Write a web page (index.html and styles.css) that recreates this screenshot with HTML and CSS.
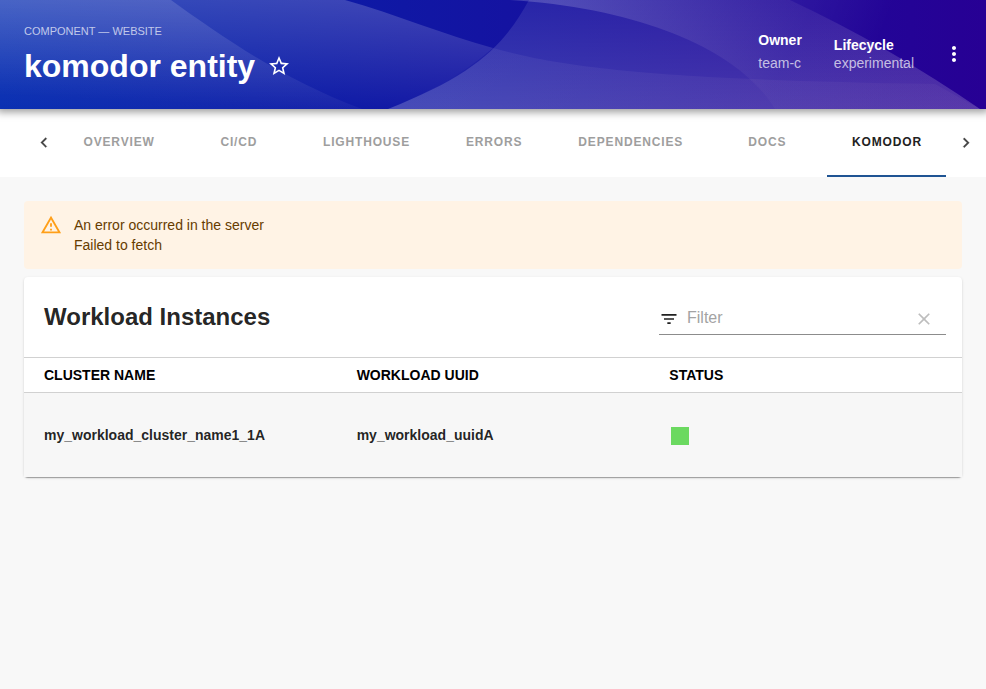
FILE: index.html
```html
<!DOCTYPE html>
<html lang="en">
<head>
<meta charset="utf-8">
<title>komodor entity</title>
<link rel="stylesheet" href="styles.css">
</head>
<body>
<header class="header">
  <svg class="waves" viewBox="0 0 986 109" preserveAspectRatio="none" aria-hidden="true">
    <defs>
      <linearGradient id="left" x1="0" y1="0" x2="0" y2="1"><stop offset="0" stop-color="#fff" stop-opacity=".14"/><stop offset="1" stop-color="#fff" stop-opacity=".04"/></linearGradient>
      <linearGradient id="band" gradientUnits="userSpaceOnUse" x1="310" y1="0" x2="305" y2="109"><stop offset="0" stop-color="#fff" stop-opacity=".19"/><stop offset="1" stop-color="#fff" stop-opacity="0"/></linearGradient>
      <linearGradient id="arc" gradientUnits="userSpaceOnUse" x1="0" y1="0" x2="0" y2="109"><stop offset="0" stop-color="#fff" stop-opacity=".08"/><stop offset="1" stop-color="#fff" stop-opacity=".18"/></linearGradient>
      <linearGradient id="low" gradientUnits="userSpaceOnUse" x1="450" y1="0" x2="900" y2="0"><stop offset="0" stop-color="#fff" stop-opacity=".06"/><stop offset="1" stop-color="#ffd0d0" stop-opacity=".04"/></linearGradient>
      <linearGradient id="top" gradientUnits="userSpaceOnUse" x1="560" y1="0" x2="760" y2="109"><stop offset="0" stop-color="#fff" stop-opacity=".18"/><stop offset="1" stop-color="#ffe0e0" stop-opacity=".025"/></linearGradient>
      <linearGradient id="corner" gradientUnits="userSpaceOnUse" x1="780" y1="0" x2="880" y2="40"><stop offset="0" stop-color="#fff" stop-opacity=".07"/><stop offset="1" stop-color="#fff" stop-opacity="0"/></linearGradient>
    </defs>
    <path fill="url(#left)" d="M0 0H171C225 39 285 80 362 109H0z"/>
    <path fill="url(#band)" d="M0 0H345C395 14 445 35 493 48C465 73 430 92 388 109H0z"/>
    <path fill="url(#arc)" d="M529 0C504 46 474 75 388 109H980Q890 47 790 0z"/>
    <path fill="url(#low)" d="M493 48C570 70 680 80 935 84L980 109H388C430 92 465 73 493 48z"/>
    <path fill="url(#top)" d="M510 0C640 8 740 50 775 109H980Q890 47 790 0z"/>
    <path fill="url(#corner)" d="M790 0H986V109H980Q890 47 790 0z"/>
  </svg>
  <div class="heading">
    <p class="kind">COMPONENT — WEBSITE</p>
    <h1 class="title">komodor entity
      <svg class="star" viewBox="0 0 24 24"><path d="M22 9.24l-7.19-.62L12 2 9.19 8.63 2 9.24l5.46 4.73L5.82 21 12 17.27 18.18 21l-1.63-7.03L22 9.24zM12 15.4l-3.76 2.27 1-4.28-3.32-2.88 4.38-.38L12 6.1l1.71 4.04 4.38.38-3.32 2.88 1 4.28L12 15.4z"/></svg>
    </h1>
  </div>
  <dl class="meta owner"><dt>Owner</dt><dd>team-c</dd></dl>
  <dl class="meta lifecycle"><dt>Lifecycle</dt><dd>experimental</dd></dl>
  <svg class="more" viewBox="0 0 24 24"><path d="M12 8c1.1 0 2-.9 2-2s-.9-2-2-2-2 .9-2 2 .9 2 2 2zm0 2c-1.1 0-2 .9-2 2s.9 2 2 2 2-.9 2-2-.9-2-2-2zm0 6c-1.1 0-2 .9-2 2s.9 2 2 2 2-.9 2-2-.9-2-2-2z"/></svg>
</header>
<nav class="tabs">
  <svg class="chevron" viewBox="0 0 24 24"><path d="M15.41 16.09l-4.58-4.59 4.58-4.59L14 5.5l-6 6 6 6z"/></svg>
  <div class="tablist">
    <a class="tab">OVERVIEW</a><a class="tab">CI/CD</a><a class="tab">LIGHTHOUSE</a><a class="tab">ERRORS</a><a class="tab">DEPENDENCIES</a><a class="tab">DOCS</a><a class="tab active">KOMODOR</a>
  </div>
  <svg class="chevron" viewBox="0 0 24 24"><path d="M8.59 16.34l4.58-4.59-4.58-4.59L10 5.75l6 6-6 6z"/></svg>
</nav>
<main class="content">
  <div class="alert">
    <svg class="warning" viewBox="0 0 24 24"><path d="M12 5.99L19.53 19H4.47L12 5.99M12 2L1 21h22L12 2zm1 14h-2v2h2v-2zm0-6h-2v4h2v-4z"/></svg>
    <div>An error occurred in the server<br>Failed to fetch</div>
  </div>
  <section class="card">
    <div class="toolbar">
      <h2>Workload Instances</h2>
      <div class="filter">
        <svg class="filter-icon" viewBox="0 0 24 24"><path d="M10 18h4v-2h-4v2zM3 6v2h18V6H3zm3 7h12v-2H6v2z"/></svg>
        <span class="placeholder">Filter</span>
        <svg class="clear" viewBox="0 0 24 24"><path d="M19 6.41L17.59 5 12 10.59 6.41 5 5 6.41 10.59 12 5 17.59 6.41 19 12 13.41 17.59 19 19 17.59 13.41 12z"/></svg>
      </div>
    </div>
    <div class="row head"><span>CLUSTER NAME</span><span>WORKLOAD UUID</span><span>STATUS</span></div>
    <div class="row body"><span>my_workload_cluster_name1_1A</span><span>my_workload_uuidA</span><span><i class="status"></i></span></div>
  </section>
</main>
</body>
</html>
```
FILE: styles.css
```css
* { box-sizing: border-box; }
body { margin: 0; background: #f8f8f8; color: rgba(0,0,0,.87); font: 14px/20px "Liberation Sans", Arial, sans-serif; }
h1, h2, p, dl, dd { margin: 0; }

.header { position: relative; z-index: 2; display: flex; align-items: center; height: 109px; padding: 0 20px 2px 24px; background: linear-gradient(90deg, #0027af, #270094); box-shadow: 0 0 8px 3px rgba(0,0,0,.4); clip-path: inset(0 0 -14px 0); color: #fff; }
.waves { position: absolute; inset: 0; width: 100%; height: 100%; }
.heading { position: relative; flex: 1; padding-bottom: 2px; }
.kind { font-size: 11px; line-height: 14px; color: rgba(255,255,255,.7); margin: 0 0 12px; }
.title { display: flex; align-items: center; gap: 12px; font-size: 32px; line-height: 32px; white-space: nowrap; }
.star { width: 24px; height: 24px; fill: #fff; }
.meta { position: relative; }
.meta dt { font-weight: 700; line-height: 18px; }
.meta dd { line-height: 18px; color: rgba(255,255,255,.7); }
.owner { margin-right: 32px; padding-bottom: 5px; }
.owner dt { margin-bottom: 5px; }
.lifecycle { margin-right: 28px; }
.more { position: relative; width: 24px; height: 24px; fill: #fff; }

.tabs { display: flex; height: 68px; background: #fff; padding: 0 10px 0 34px; }
.chevron { width: 20px; height: 20px; margin-top: 24px; fill: #444; stroke: #444; stroke-width: .3; flex: none; }
.tablist { display: flex; flex: 1; padding-left: 4.5px; }
.tab { min-width: 118.3px; padding: 23px 25px 0; text-align: center; font-size: 12px; line-height: 20px; font-weight: 700; letter-spacing: .84px; color: #9e9e9e; white-space: nowrap; }
.tab.active { width: 119px; margin-left: .6px; padding-inline: 1px 0; color: #222; border-bottom: 2px solid #1f5493; }

.content { padding: 24px; }
.alert { display: flex; gap: 12px; height: 68px; padding: 14px 16px; border-radius: 4px; background: #fff3e5; color: #663c00; }
.warning { width: 22px; height: 22px; fill: #ff9f19; flex: none; margin-top: -1px; }
.card { margin-top: 8px; height: 200px; border-radius: 4px; background: #fff; box-shadow: 0 2px 1px -1px rgba(0,0,0,.2), 0 1px 1px rgba(0,0,0,.14), 0 1px 3px rgba(0,0,0,.12); }
.toolbar { display: flex; justify-content: space-between; height: 80px; padding: 22px 16px 0 20px; }
h2 { font-size: 24px; line-height: 36px; }
.filter { display: flex; align-items: center; width: 287px; height: 36px; border-bottom: 1px solid #8c8c8c; }
.filter-icon { width: 20px; height: 20px; margin: 4px 8px 0 0; fill: #212121; }
.placeholder { flex: 1; padding-top: 2px; font-size: 16px; color: #a3a3a3; }
.clear { width: 20px; height: 20px; margin: 4px 12px 0 0; fill: #bdbdbd; }
.row { display: grid; grid-template-columns: repeat(3, 1fr); align-items: center; font-weight: 700; border-top: 1px solid #d1d1d1; }
.row > span { padding-left: 20px; }
.head { height: 35px; color: #000; }
.body { height: 85px; background: #f7f7f7; }
.status { display: block; width: 18px; height: 18px; margin: 1px 0 0 2px; background: #6bd960; }
```
